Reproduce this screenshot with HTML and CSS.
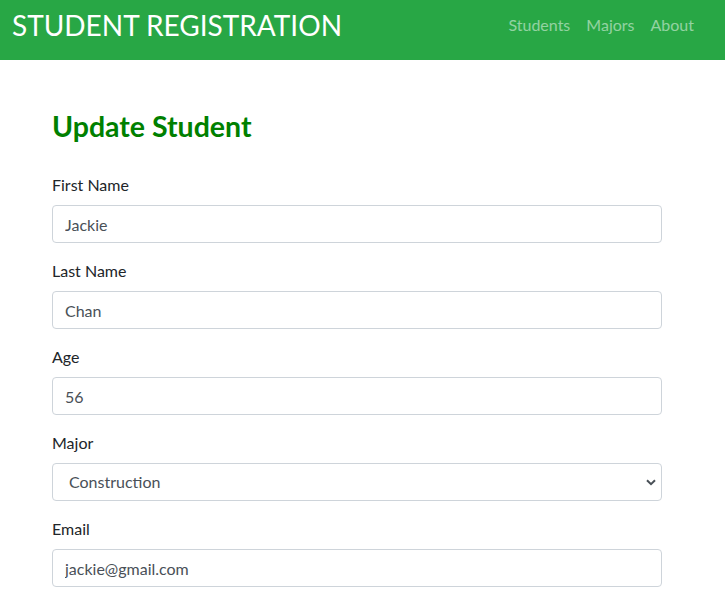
FILE: index.html
```html
<!DOCTYPE html>
<html lang="en">
<head>
<meta charset="utf-8">
<title>Student Registration</title>
<link rel="stylesheet" href="styles.css">
</head>
<body>
<nav class="navbar">
  <a class="brand" href="#">STUDENT REGISTRATION</a>
  <ul class="nav-links">
    <li><a href="#">Students</a></li>
    <li><a href="#">Majors</a></li>
    <li><a href="#">About</a></li>
  </ul>
</nav>
<main class="container">
  <h2 class="title">Update Student</h2>
  <form class="form">
    <div class="form-group">
      <label for="first">First Name</label>
      <input id="first" class="form-control" type="text" value="Jackie">
    </div>
    <div class="form-group">
      <label for="last">Last Name</label>
      <input id="last" class="form-control" type="text" value="Chan">
    </div>
    <div class="form-group">
      <label for="age">Age</label>
      <input id="age" class="form-control" type="text" value="56">
    </div>
    <div class="form-group">
      <label for="major">Major</label>
      <div class="select-wrap">
        <select id="major" class="form-control select">
          <option>Construction</option>
        </select>
        <svg class="chevron" width="10" height="7" viewBox="0 0 10 7"><path d="M1 1.2 L5 5.2 L9 1.2" fill="none" stroke="#495057" stroke-width="2"/></svg>
      </div>
    </div>
    <div class="form-group">
      <label for="email">Email</label>
      <input id="email" class="form-control" type="text" value="jackie@gmail.com">
    </div>
  </form>
</main>
</body>
</html>
```
FILE: styles.css
```css
* { box-sizing: border-box; }
body {
  margin: 0;
  font-family: "Lato", "Noto Sans", sans-serif;
  font-size: 16px;
  line-height: 1.5;
  color: #212529;
  background: #fff;
}
.navbar {
  height: 60px;
  background: #28a745;
  display: flex;
  align-items: center;
  justify-content: space-between;
  padding: 0 23px 10px 12px;
}
.brand {
  color: #fff;
  text-decoration: none;
  font-size: 28px;
  line-height: 1;
}
.nav-links {
  list-style: none;
  margin: 0;
  padding: 0;
  display: flex;
}
.nav-links a {
  display: block;
  padding: 8px;
  color: rgba(255, 255, 255, 0.5);
  text-decoration: none;
}
.container {
  padding: 49px 63px 0 52px;
}
.title {
  margin: 0 0 30px;
  color: #008000;
  font-size: 28.5px;
  font-weight: 700;
  line-height: 1.2;
}
.form-group {
  margin-bottom: 16px;
}
label {
  display: block;
  margin-bottom: 8px;
}
.form-control {
  display: block;
  width: 100%;
  height: 38px;
  padding: 6px 12px;
  font-family: inherit;
  font-size: 16px;
  line-height: 1.5;
  color: #495057;
  background: #fff;
  border: 1px solid #ced4da;
  border-radius: 4px;
}
.select-wrap {
  position: relative;
}
.select {
  appearance: none;
  -webkit-appearance: none;
  padding-left: 16px;
}
.chevron {
  position: absolute;
  right: 6px;
  top: 16px;
}
```
